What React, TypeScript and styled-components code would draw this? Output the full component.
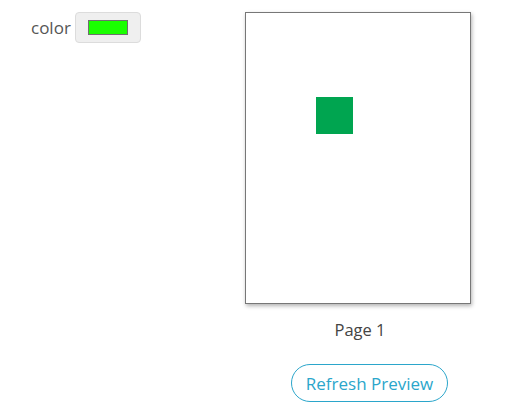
import React from "react";
import styled, { createGlobalStyle } from "styled-components";

const Global = createGlobalStyle`
  html, body { margin: 0; padding: 0; background: #fff; }
  body { font-family: "Open Sans", "Liberation Sans", sans-serif; }
`;

const Layout = styled.div`
  display: flex;
  align-items: flex-start;
  width: 532px;
  height: 417px;
`;

const Controls = styled.div`
  width: 245px;
  box-sizing: border-box;
  padding: 12px 0 0 31px;
`;

const Field = styled.div`
  display: flex;
  align-items: center;
  gap: 4px;
`;

const Label = styled.span`
  font-size: 17px;
  color: #555;
  line-height: 30px;
`;

const ColorButton = styled.button`
  width: 66px;
  height: 31px;
  box-sizing: border-box;
  padding: 0;
  display: flex;
  align-items: center;
  justify-content: center;
  background: #efefef;
  border: 1px solid #dcdcdc;
  border-radius: 4px;
`;

const Swatch = styled.span<{ $color: string }>`
  width: 40px;
  height: 15px;
  box-sizing: border-box;
  border: 1px solid #6f6f6f;
  background: ${(p) => p.$color};
`;

const Preview = styled.div`
  display: flex;
  flex-direction: column;
  padding-top: 12px;
`;

const Sheet = styled.div`
  width: 226px;
  height: 292px;
  box-sizing: border-box;
  border: 1px solid #777;
  background: #fff;
  box-shadow: 1px 2px 4px rgba(0, 0, 0, 0.3);
  padding: 84px 0 0 70px;
`;

const Shape = styled.div`
  width: 37px;
  height: 37px;
  background: #00a550;
`;

const PageLabel = styled.div`
  width: 226px;
  text-align: center;
  font-size: 16.5px;
  color: #444;
  margin-top: 15px;
  padding-left: 4px;
  box-sizing: border-box;
  line-height: 22px;
`;

const RefreshButton = styled.button`
  margin: 23px 0 0 46px;
  width: 157px;
  height: 38px;
  box-sizing: border-box;
  background: #fff;
  border: 1px solid #2ba6cb;
  border-radius: 19px;
  color: #2ba6cb;
  font-family: "Open Sans", "Liberation Sans", sans-serif;
  font-size: 17px;
  padding: 0;
`;

export default function App() {
  return (
    <>
      <Global />
      <Layout>
        <Controls>
          <Field>
            <Label>color</Label>
            <ColorButton>
              <Swatch $color="#1aff00" />
            </ColorButton>
          </Field>
        </Controls>
        <Preview>
          <Sheet>
            <Shape />
          </Sheet>
          <PageLabel>Page 1</PageLabel>
          <RefreshButton>Refresh Preview</RefreshButton>
        </Preview>
      </Layout>
    </>
  );
}
